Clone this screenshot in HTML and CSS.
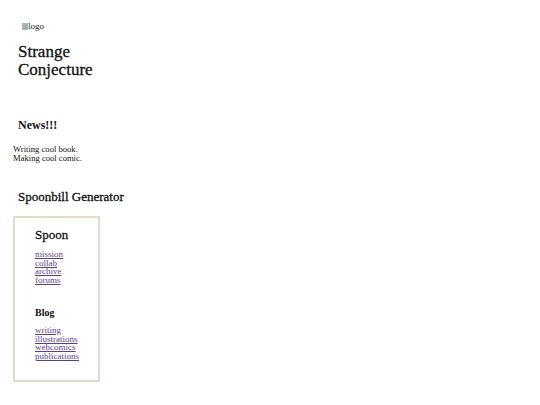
FILE: index.html
```html
<!DOCTYPE html>
<html>
<head>
<meta charset="utf-8">
<link rel="stylesheet" href="styles.css">
</head>
<body>
<header class="masthead">
  <div class="logo"><span class="broken"></span>logo</div>
  <h1 class="site-title">Strange<br>Conjecture</h1>
</header>
<section class="news">
  <h2 class="section-title">News!!!</h2>
  <p class="news-text">Writing cool book.<br>Making cool comic.</p>
</section>
<section class="generator">
  <h2 class="section-title gen-title">Spoonbill Generator</h2>
  <nav class="menu-box">
    <h3 class="menu-title">Spoon</h3>
    <ul class="menu-list">
      <li><a href="#">mission</a></li>
      <li><a href="#">collab</a></li>
      <li><a href="#">archive</a></li>
      <li><a href="#">forums</a></li>
    </ul>
    <h4 class="menu-sub">Blog</h4>
    <ul class="menu-list">
      <li><a href="#">writing</a></li>
      <li><a href="#">illustrations</a></li>
      <li><a href="#">webcomics</a></li>
      <li><a href="#">publications</a></li>
    </ul>
  </nav>
</section>
</body>
</html>
```
FILE: styles.css
```css
html, body { margin: 0; padding: 0; background: #fff; }
body {
  font-family: "Liberation Serif", serif;
  color: #111;
  padding: 0 13px;
}
.masthead { padding: 20px 5px 0 5px; }
.logo {
  display: flex;
  align-items: center;
  font-size: 9px;
  color: #222;
  margin-left: 4px;
  height: 12px;
}
.broken {
  display: inline-block;
  width: 6px;
  height: 7px;
  background: linear-gradient(135deg, #a9c6d8 0%, #7fae86 100%);
  border: 1px solid #b8b8b8;
  box-sizing: border-box;
}
.site-title {
  font-weight: normal;
  font-size: 17px;
  line-height: 17.5px;
  margin: 11px 0 0 0;
  -webkit-text-stroke: 0.3px #111;
}
.news { padding-top: 39px; }
.section-title {
  font-size: 12px;
  font-weight: bold;
  margin: 0 0 0 5px;
  line-height: 16px;
}
.news-text {
  font-size: 8.6px;
  line-height: 8.5px;
  margin: 12px 0 0 0;
}
.generator { padding-top: 27px; }
.gen-title {
  font-weight: normal;
  font-size: 13px;
  -webkit-text-stroke: 0.3px #111;
}
.menu-box {
  margin-top: 11px;
  width: 63px;
  height: 162px;
  border: 2px solid #e6d9c6;
  padding: 0 0 0 20px;
}
.menu-title {
  font-weight: normal;
  font-size: 13px;
  margin: 9px 0 0 0;
  line-height: 16px;
  -webkit-text-stroke: 0.3px #111;
}
.menu-list {
  list-style: none;
  margin: 7px 0 0 0;
  padding: 0;
  font-size: 9px;
  line-height: 8.5px;
}
.menu-list a { color: #5b3f8f; }
.menu-sub {
  font-size: 10px;
  font-weight: bold;
  margin: 23px 0 0 0;
  line-height: 12px;
}
```
